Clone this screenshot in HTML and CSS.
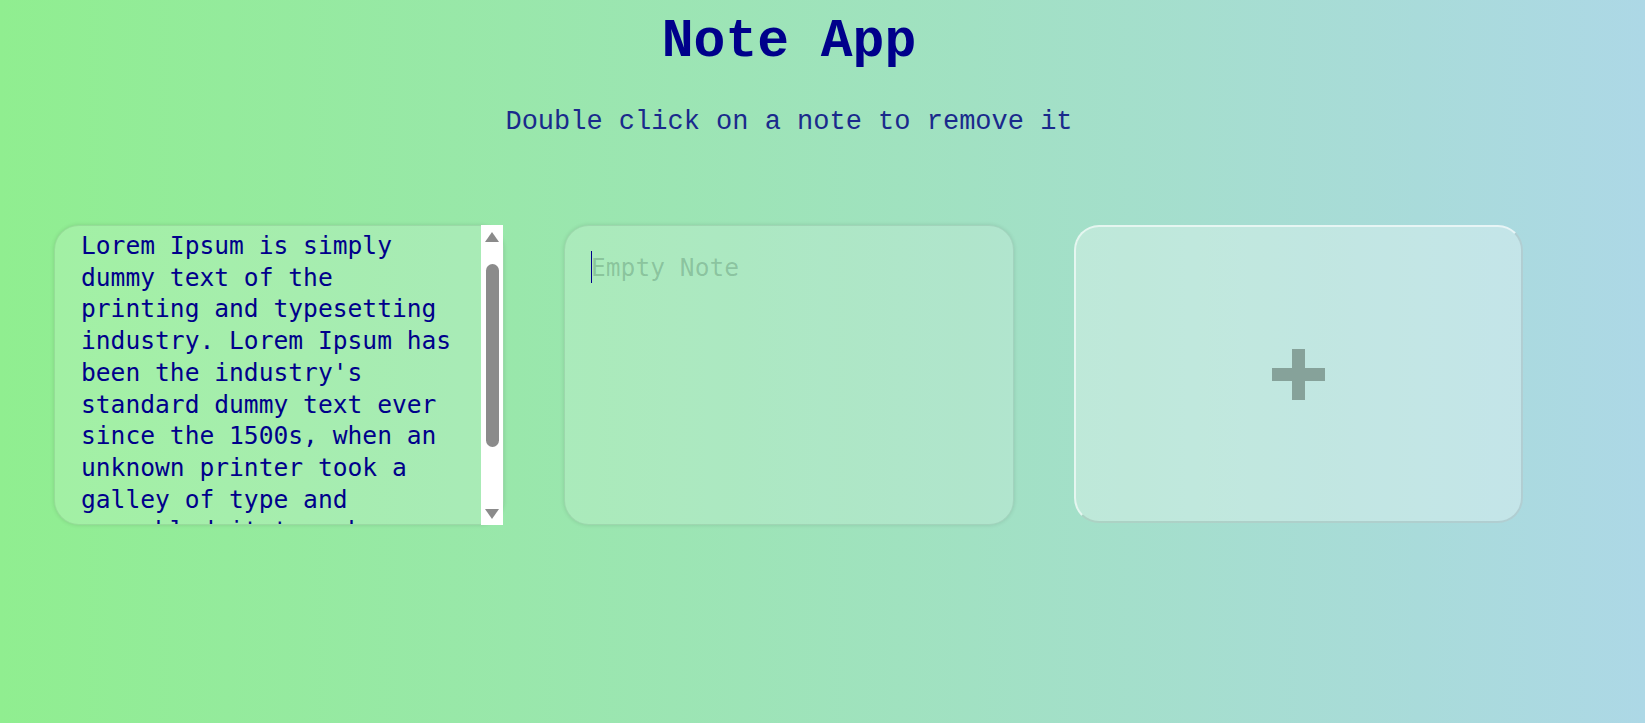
FILE: index.html
```html
<!DOCTYPE html>
<html lang="en">
<head>
<meta charset="utf-8">
<title>Note App</title>
<link rel="stylesheet" href="styles.css">
</head>
<body>
  <header class="header">
    <h1 class="title">Note App</h1>
    <p class="subtitle">Double click on a note to remove it</p>
  </header>
  <main class="notes">
    <div class="note-wrap">
      <textarea class="note note-filled" placeholder="Empty Note">Lorem Ipsum is simply dummy text of the printing and typesetting industry. Lorem Ipsum has been the industry's standard dummy text ever since the 1500s, when an unknown printer took a galley of type and scrambled it to make a type specimen book.</textarea>
      <div class="scrollbar" aria-hidden="true">
        <svg class="arrow arrow-up" width="14" height="10" viewBox="0 0 14 10"><polygon points="7,0 14,10 0,10" fill="currentColor"/></svg>
        <div class="thumb"></div>
        <svg class="arrow arrow-down" width="14" height="10" viewBox="0 0 14 10"><polygon points="0,0 14,0 7,10" fill="currentColor"/></svg>
      </div>
    </div>
    <div class="note-wrap">
      <textarea class="note note-empty" placeholder="Empty Note"></textarea>
      <span class="caret" aria-hidden="true"></span>
    </div>
    <button class="add-note" type="button" aria-label="Add note">
      <svg class="plus" width="53" height="51" viewBox="0 0 53 51" aria-hidden="true">
        <rect x="20" y="0" width="13" height="51" fill="currentColor"/>
        <rect x="0" y="19" width="53" height="13" fill="currentColor"/>
      </svg>
    </button>
  </main>
  <script src="script.js"></script>
</body>
</html>
```

FILE: styles.css
```css
html, body {
  margin: 0;
  padding: 0;
}

body {
  min-height: 100vh;
  background: linear-gradient(to right, #90ee90, #add8e6);
  font-family: "Liberation Mono", "Courier New", monospace;
  color: #00008b;
}

.header {
  width: 1578px;
  text-align: center;
}

.title {
  margin: 10px 0 0;
  font-size: 53px;
  line-height: 64px;
  font-weight: bold;
  color: #00008b;
}

.subtitle {
  margin: 33px 0 0;
  font-size: 27px;
  line-height: 31px;
  color: #1a2a8c;
}

.notes {
  display: flex;
  gap: 60px;
  padding: 87px 0 0 54px;
}

.note-wrap {
  position: relative;
  width: 450px;
  height: 300px;
}

.note {
  display: block;
  box-sizing: border-box;
  width: 450px;
  height: 300px;
  margin: 0;
  padding: 26px 26px 26px 26px;
  border: 1px solid rgba(0, 0, 0, 0.08);
  border-radius: 25px;
  background: rgba(255, 255, 255, 0.16);
  box-shadow: 0 0 4px rgba(0, 0, 0, 0.12);
  font-family: "DejaVu Sans Mono", monospace;
  font-size: 24.6px;
  line-height: 31.7px;
  color: #00008b;
  caret-color: #00008b;
  resize: none;
  outline: none;
}

.note-filled {
  padding-right: 48px;
}

.note::placeholder {
  color: rgba(0, 40, 20, 0.2);
}

.scrollbar {
  position: absolute;
  top: 0;
  right: 1px;
  bottom: 0;
  width: 22px;
  display: flex;
  flex-direction: column;
  align-items: center;
  background: #fff;
  color: #8b8b8b;
}

.arrow {
  display: block;
  flex: none;
}

.arrow-up {
  margin-top: 7px;
}

.thumb {
  width: 13px;
  height: 183px;
  margin: 22px 0 0 1px;
  border-radius: 7px;
  background: #8b8b8b;
}

.arrow-down {
  margin-top: auto;
  margin-bottom: 6px;
}

.caret {
  position: absolute;
  left: 27px;
  top: 26px;
  width: 1px;
  height: 32px;
  background: #00008b;
}

.add-note {
  box-sizing: border-box;
  width: 449px;
  height: 298px;
  margin: 0;
  padding: 0;
  display: flex;
  align-items: center;
  justify-content: center;
  border: 2px solid;
  border-color: rgba(255, 255, 255, 0.6) rgba(0, 0, 0, 0.1) rgba(0, 0, 0, 0.1) rgba(255, 255, 255, 0.6);
  border-radius: 25px;
  background: rgba(255, 255, 255, 0.3);
  color: #86a29a;
  cursor: pointer;
}

.plus {
  display: block;
}
```

FILE: script.js
```js
document.querySelector('.note-filled').scrollTop = 22;
```
